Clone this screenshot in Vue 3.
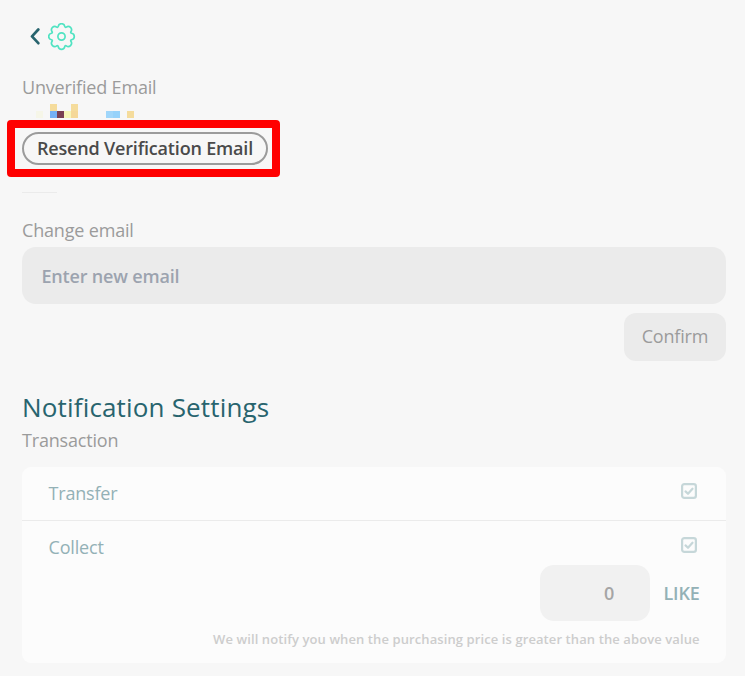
<script setup>
import { ref } from 'vue'

const email = ref('')
const threshold = ref('0')

// Colours of the redacted address, one cell per mosaic block
const mosaic = [
  ['', '', '#f5dc9c', '', '', '#f5dc9c', '', '', '', '', '', '', '', ''],
  ['#f6f6e8', '', '#74b0f4', '#7a4052', '#f7f6b8', '#f5d898', '', '', '', '', '#a0d6fa', '#96d2fa', '', '#f5dc9c'],
]
</script>

<template>
  <main class="page">
    <header class="topbar">
      <svg class="back" viewBox="0 0 10 17" width="10" height="17">
        <path d="M8.3 1.5 L2 8.4 L8.3 15.2" />
      </svg>
      <svg class="gear" viewBox="-13.5 -13.5 28 28" width="28" height="28">
        <path d="M10.06 -3.25 A3.3 3.3 0 0 1 10.06 3.25 A1 1 0 0 0 9.41 4.82 A3.3 3.3 0 0 1 4.82 9.41 A1 1 0 0 0 3.25 10.06 A3.3 3.3 0 0 1 -3.25 10.06 A1 1 0 0 0 -4.82 9.41 A3.3 3.3 0 0 1 -9.41 4.82 A1 1 0 0 0 -10.06 3.25 A3.3 3.3 0 0 1 -10.06 -3.25 A1 1 0 0 0 -9.41 -4.82 A3.3 3.3 0 0 1 -4.82 -9.41 A1 1 0 0 0 -3.25 -10.06 A3.3 3.3 0 0 1 3.25 -10.06 A1 1 0 0 0 4.82 -9.41 A3.3 3.3 0 0 1 9.41 -4.82 A1 1 0 0 0 10.06 -3.25 Z" />
        <circle r="3.6" />
      </svg>
    </header>

    <section class="unverified">
      <p class="label">Unverified Email</p>
      <div class="mosaic">
        <div v-for="(row, r) in mosaic" :key="r" class="mosaic-row">
          <i v-for="(c, i) in row" :key="i" :style="{ background: c }"></i>
        </div>
      </div>
      <div class="highlight">
        <button class="resend">Resend Verification Email</button>
      </div>
      <hr class="divider" />
    </section>

    <section class="change">
      <p class="label">Change email</p>
      <input v-model="email" class="email" placeholder="Enter new email" />
      <button class="confirm">Confirm</button>
    </section>

    <section class="notifications">
      <h2>Notification Settings</h2>
      <p class="label">Transaction</p>
      <div class="card">
        <div class="row">
          <span>Transfer</span>
          <svg class="check" viewBox="0 0 16 16" width="16" height="16">
            <rect x="1.1" y="1.1" width="13.8" height="13.8" rx="2.2" />
            <path d="M4.5 8.4 L7 10.8 L11.5 5.7" />
          </svg>
        </div>
        <div class="row second">
          <span>Collect</span>
          <svg class="check" viewBox="0 0 16 16" width="16" height="16">
            <rect x="1.1" y="1.1" width="13.8" height="13.8" rx="2.2" />
            <path d="M4.5 8.4 L7 10.8 L11.5 5.7" />
          </svg>
        </div>
        <div class="amount">
          <input v-model="threshold" class="value" />
          <span class="unit">LIKE</span>
        </div>
        <p class="hint">We will notify you when the purchasing price is greater than the above value</p>
      </div>
    </section>
  </main>
</template>

<style>
body {
  background: #f7f7f7;
}
</style>

<style scoped>
.page {
  box-sizing: border-box;
  height: 676px;
  padding: 22px 19px 0 22px;
  background: #f7f7f7;
  font-family: "Open Sans", "Noto Sans", sans-serif;
  font-size: 18px;
  letter-spacing: -0.18px;
  color: #9b9b9b;
  white-space: nowrap;
  overflow: hidden;
}
p, h2 { margin: 0; }
button, input {
  box-sizing: border-box;
  border: 0;
  margin: 0;
  font-family: inherit;
  font-size: 18px;
  letter-spacing: inherit;
  outline: none;
}
.topbar {
  display: flex;
  align-items: center;
  height: 29px;
  padding-left: 8px;
}
svg { fill: none; flex: none; }
.back { stroke: #28646e; stroke-width: 2.7; stroke-linecap: round; stroke-linejoin: round; }
.gear { height: 28px; margin: 1px 0 0 8px; stroke: #50e3c2; stroke-width: 1.7; stroke-linejoin: round; }
.label { height: 26px; line-height: 26px; }
.unverified { padding-top: 23px; }
.mosaic { margin: 4px 0 0 14px; height: 14px; }
.mosaic-row { display: flex; height: 7px; }
.mosaic-row i { width: 7px; }
.highlight {
  box-sizing: border-box;
  width: 273px;
  height: 57px;
  margin: 2px 0 0 -15px;
  border: 8px solid #f00;
  border-radius: 4px;
  padding: 4px 0 0 7px;
}
.resend {
  display: flex;
  align-items: center;
  justify-content: center;
  width: 246px;
  height: 33px;
  padding: 0 0 2px;
  border: 2px solid #9b9b9b;
  border-radius: 17px;
  background: transparent;
  color: #4a4a4a;
  font-weight: 600;
}
.divider {
  width: 35px;
  height: 1px;
  margin: 15px 0 0;
  border: 0;
  background: #ebebeb;
}
.change {
  display: flex;
  flex-direction: column;
  padding-top: 24px;
}
.email {
  height: 57px;
  margin-top: 4px;
  padding: 0 19.5px;
  border-radius: 14px;
  background: #ebebeb;
  font-weight: 600;
}
.email::placeholder { color: #9ca3af; opacity: 1; }
.confirm {
  align-self: flex-end;
  width: 102px;
  height: 48px;
  margin-top: 9px;
  padding: 0 0 2px;
  border-radius: 12px;
  background: #ebebeb;
  color: #9b9b9b;
}
.notifications { padding-top: 27px; }
h2 {
  height: 39px;
  line-height: 38px;
  font-size: 26px;
  font-weight: 400;
  letter-spacing: 0.17px;
  color: #28646e;
}
.card {
  box-sizing: border-box;
  height: 196px;
  margin-top: 14px;
  border-radius: 9px;
  background: #fcfcfc;
}
.row {
  box-sizing: border-box;
  display: flex;
  align-items: flex-start;
  justify-content: space-between;
  height: 54px;
  padding: 13px 29px 0 26.5px;
  border-bottom: 1px solid #ebebeb;
  line-height: 26px;
  color: #93b1b6;
}
.row.second { height: 44px; border-bottom: 0; }
.check { margin-top: 3px; stroke: #c6d7d9; stroke-width: 2.2; stroke-linecap: round; stroke-linejoin: round; }
.amount {
  display: flex;
  align-items: center;
  justify-content: flex-end;
  gap: 13.7px;
  padding-right: 26.4px;
}
.value {
  width: 110px;
  height: 56px;
  padding: 0 35.6px 0 20px;
  border-radius: 14px;
  background: #f1f1f1;
  text-align: right;
  font-weight: 600;
  color: #a5a5a5;
}
.unit { font-weight: 600; color: #93b1b6; }
.hint {
  height: 20px;
  margin-top: 8px;
  padding-right: 26.4px;
  line-height: 20px;
  text-align: right;
  font-size: 13px;
  font-weight: 600;
  letter-spacing: 0.095px;
  color: #cdcdcd;
}
</style>
